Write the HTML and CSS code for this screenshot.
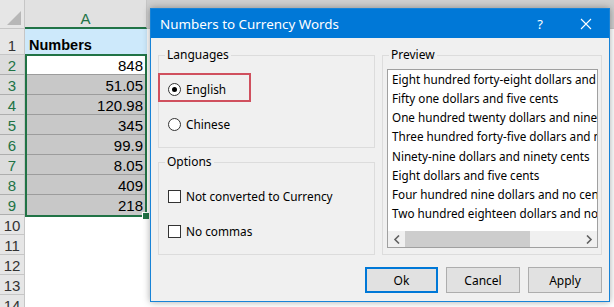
FILE: index.html
```html
<!DOCTYPE html>
<html>
<head>
<meta charset="utf-8">
<link rel="stylesheet" href="styles.css">
</head>
<body>
<div class="screen">
  <div class="sheet">
    <div class="corner"><span class="tri"></span></div>
    <div class="colhead sel">A</div>
    <div class="colhead rest"></div>

    <div class="rowhead">1</div><div class="cell title">Numbers</div><div class="cell"></div>
    <div class="rowhead sel">2</div><div class="cell num active">848</div><div class="cell"></div>
    <div class="rowhead sel">3</div><div class="cell num">51.05</div><div class="cell"></div>
    <div class="rowhead sel">4</div><div class="cell num">120.98</div><div class="cell"></div>
    <div class="rowhead sel">5</div><div class="cell num">345</div><div class="cell"></div>
    <div class="rowhead sel">6</div><div class="cell num">99.9</div><div class="cell"></div>
    <div class="rowhead sel">7</div><div class="cell num">8.05</div><div class="cell"></div>
    <div class="rowhead sel">8</div><div class="cell num">409</div><div class="cell"></div>
    <div class="rowhead sel">9</div><div class="cell num last">218</div><div class="cell"></div>
    <div class="rowhead">10</div><div class="cell"></div><div class="cell"></div>
    <div class="rowhead">11</div><div class="cell"></div><div class="cell"></div>
    <div class="rowhead">12</div><div class="cell"></div><div class="cell"></div>
    <div class="rowhead">13</div><div class="cell"></div><div class="cell"></div>
    <div class="rowhead">14</div><div class="cell"></div><div class="cell"></div>
  </div>
  <div class="selection"><span class="handle"></span></div>

  <div class="dialog">
    <div class="titlebar">
      <span class="title-text">Numbers to Currency Words</span>
      <span class="tb-help">?</span>
      <span class="tb-close">
        <svg width="12" height="12" viewBox="0 0 12 12"><path d="M1 1 L11 11 M11 1 L1 11" stroke="#fff" stroke-width="1.1" fill="none"/></svg>
      </span>
    </div>
    <div class="client">
      <div class="panes">
        <div class="leftcol">
          <fieldset class="group">
            <legend>Languages</legend>
            <div class="opts">
              <div class="opt hl"><span class="radio on"></span><span>English</span></div>
              <div class="opt"><span class="radio"></span><span>Chinese</span></div>
            </div>
          </fieldset>
          <fieldset class="group">
            <legend>Options</legend>
            <div class="opts">
              <div class="opt"><span class="check"></span><span>Not converted to Currency</span></div>
              <div class="opt"><span class="check"></span><span>No commas</span></div>
            </div>
          </fieldset>
        </div>
        <fieldset class="group preview">
          <legend>Preview</legend>
          <div class="listbox">
            <div class="lines">
              <div>Eight hundred forty-eight dollars and no cents</div>
              <div>Fifty one dollars and five cents</div>
              <div>One hundred twenty dollars and ninety-eight cents</div>
              <div>Three hundred forty-five dollars and no cents</div>
              <div>Ninety-nine dollars and ninety cents</div>
              <div>Eight dollars and five cents</div>
              <div>Four hundred nine dollars and no cents</div>
              <div>Two hundred eighteen dollars and no cents</div>
            </div>
            <div class="hscroll">
              <span class="arrow">
                <svg width="8" height="9" viewBox="0 0 8 9"><path d="M6 0.5 L2 4.5 L6 8.5" stroke="#606060" stroke-width="1.6" fill="none"/></svg>
              </span>
              <span class="track"><span class="thumb"></span></span>
              <span class="arrow">
                <svg width="8" height="9" viewBox="0 0 8 9"><path d="M2 0.5 L6 4.5 L2 8.5" stroke="#606060" stroke-width="1.6" fill="none"/></svg>
              </span>
            </div>
          </div>
        </fieldset>
      </div>
      <div class="buttons">
        <button class="btn default">Ok</button>
        <button class="btn">Cancel</button>
        <button class="btn">Apply</button>
      </div>
    </div>
  </div>
</div>
</body>
</html>
```
FILE: styles.css
```css
html, body {
  margin: 0;
  padding: 0;
  background: #ffffff;
}
.screen {
  position: relative;
  width: 614px;
  height: 307px;
  overflow: hidden;
  background: #ffffff;
}
.sheet {
  display: grid;
  grid-template-columns: 25px 122px 1fr;
  grid-template-rows: 29px 26px repeat(13, 20px);
  font-family: "Liberation Sans", Arial, sans-serif;
  font-size: 15px;
  color: #000;
}
.corner {
  position: relative;
  background: #e6e6e6;
  border-right: 1px solid #c6c6c6;
  border-bottom: 1px solid #c6c6c6;
  box-sizing: border-box;
}
.tri {
  position: absolute;
  right: 3px;
  bottom: 3px;
  width: 0;
  height: 0;
  border-left: 14px solid transparent;
  border-bottom: 14px solid #b7b7b7;
}
.colhead {
  box-sizing: border-box;
  display: flex;
  align-items: flex-end;
  justify-content: center;
  padding-bottom: 0;
}
.colhead.sel {
  background: #e1e1e1;
  color: #217346;
  border-bottom: 2px solid #217346;
  border-right: 1px solid #c6c6c6;
}
.colhead.rest {
  background: #cfcfcf;
  border-bottom: 1px solid #c6c6c6;
}
.rowhead {
  box-sizing: border-box;
  background: #e6e6e6;
  color: #333;
  border-right: 1px solid #c6c6c6;
  border-bottom: 1px solid #c6c6c6;
  display: flex;
  align-items: flex-end;
  justify-content: center;
  font-size: 15px;
  line-height: 17px;
}
.rowhead.sel {
  background: #dcdcdc;
  color: #217346;
  border-bottom-color: #aeaeae;
}
.cell {
  box-sizing: border-box;
  display: flex;
  align-items: flex-end;
  line-height: 17px;
}
.cell.title {
  background: #cde9fb;
  font-weight: bold;
  font-size: 14.5px;
  padding-left: 4px;
  padding-bottom: 1px;
}
.cell.num {
  background: #c8c8c8;
  justify-content: flex-end;
  padding-right: 4px;
  border-bottom: 1px solid #9c9c9c;
}
.cell.num.active {
  background: #ffffff;
}
.cell.num.last {
  border-bottom: none;
  padding-bottom: 1px;
}
.selection {
  position: absolute;
  left: 25px;
  top: 54px;
  width: 122px;
  height: 163px;
  box-sizing: border-box;
  border: 2px solid #217346;
}
.handle {
  position: absolute;
  right: -5px;
  bottom: -5px;
  width: 6px;
  height: 6px;
  background: #217346;
  border: 1px solid #ffffff;
}

/* dialog */
.dialog {
  position: absolute;
  left: 150px;
  top: 8px;
  width: 460px;
  height: 294px;
  box-sizing: border-box;
  border: 1px solid #1883d7;
  background: #f0f0f0;
  box-shadow: 0 0 7px rgba(0, 0, 0, 0.35);
  display: flex;
  flex-direction: column;
  font-family: "Noto Sans", "Open Sans", sans-serif;
  font-size: 11.8px;
  color: #000;
}
.titlebar {
  height: 29px;
  background: #0078d7;
  color: #ffffff;
  display: flex;
  align-items: center;
  padding-left: 9px;
  font-size: 13.4px;
}
.title-text {
  flex: 1;
}
.tb-help {
  width: 46px;
  text-align: center;
  font-size: 13px;
}
.tb-close {
  width: 46px;
  display: flex;
  justify-content: center;
  align-items: center;
}
.client {
  flex: 1;
  padding: 9px 7px 0 7px;
  display: flex;
  flex-direction: column;
}
.panes {
  display: flex;
  gap: 7px;
  height: 208px;
}
.leftcol {
  width: 217px;
  display: flex;
  flex-direction: column;
  gap: 6px;
}
.group {
  margin: 0;
  padding: 0;
  border: 1px solid #dcdcdc;
  box-sizing: border-box;
  min-width: 0;
}
.leftcol .group {
  height: 101px;
}
.group legend {
  margin-left: 6px;
  padding: 0 2px;
  line-height: 16px;
  font-size: 12px;
}
.opts {
  display: flex;
  flex-direction: column;
  gap: 15px;
  padding: 16px 0 0 9px;
}
.opt {
  position: relative;
  height: 20px;
  display: flex;
  align-items: center;
  gap: 5px;
}
.opt.hl::after {
  content: "";
  position: absolute;
  left: -10px;
  top: -6px;
  width: 89px;
  height: 25px;
  border: 2px solid #d0505e;
}
.radio {
  width: 11px;
  height: 11px;
  border: 1px solid #333;
  border-radius: 50%;
  background: #fff;
  position: relative;
  flex: none;
}
.radio.on::after {
  content: "";
  position: absolute;
  left: 3px;
  top: 3px;
  width: 5px;
  height: 5px;
  border-radius: 50%;
  background: #000;
}
.check {
  width: 11px;
  height: 11px;
  border: 1px solid #333;
  background: #fff;
  flex: none;
}
.preview {
  width: 220px;
  height: 208px;
}
.listbox {
  margin: 6px 0 0 4px;
  width: 211px;
  height: 179px;
  box-sizing: border-box;
  border: 1px solid #a0a0a0;
  background: #fff;
  display: flex;
  flex-direction: column;
  overflow: hidden;
}
.lines {
  flex: 1;
  padding-left: 4px;
  line-height: 19.15px;
  white-space: nowrap;
  overflow: hidden;
  font-size: 11.7px;
}
.hscroll {
  height: 16px;
  background: #f0f0f0;
  display: flex;
  align-items: stretch;
}
.arrow {
  width: 17px;
  display: flex;
  align-items: center;
  justify-content: center;
  flex: none;
}
.track {
  flex: 1;
  display: flex;
}
.thumb {
  width: 125px;
  background: #cdcdcd;
}
.buttons {
  margin-top: 12px;
  display: flex;
  justify-content: flex-end;
  gap: 8px;
  padding-right: 0;
}
.btn {
  width: 74px;
  height: 26px;
  box-sizing: border-box;
  border: 1px solid #adadad;
  background: #e1e1e1;
  font-family: "Noto Sans", "Open Sans", sans-serif;
  font-size: 12px;
  color: #000;
  padding: 0;
  margin: 0;
}
.btn.default {
  width: 73px;
  border: 2px solid #0078d7;
}
```
